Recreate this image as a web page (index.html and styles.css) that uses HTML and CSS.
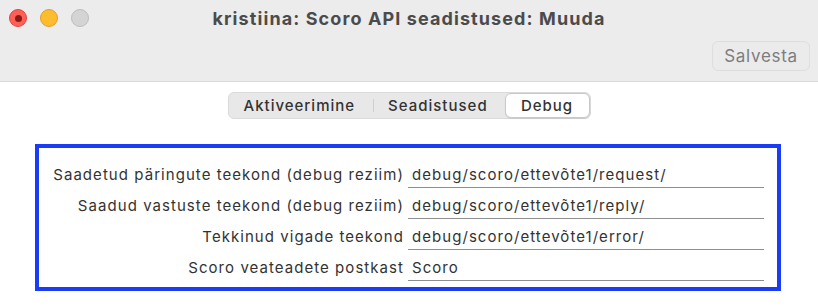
FILE: index.html
```html
<!DOCTYPE html>
<html lang="et">
<head>
  <meta charset="UTF-8">
  <meta name="viewport" content="width=device-width, initial-scale=1.0">
  <title>kristiina: Scoro API seadistused: Muuda</title>
  <link rel="stylesheet" href="styles.css">
</head>
<body>
  <div class="window">
    <div class="titlebar">
      <div class="title-row">
        <div class="lights">
          <span class="light close"><span class="dot"></span></span>
          <span class="light minimize"></span>
          <span class="light zoom"></span>
        </div>
        <div class="title">kristiina: Scoro API seadistused: Muuda</div>
      </div>
      <div class="toolbar">
        <button class="save">Salvesta</button>
      </div>
    </div>

    <div class="content">
      <div class="tabs">
        <div class="tab">Aktiveerimine</div>
        <div class="sep"></div>
        <div class="tab">Seadistused</div>
        <div class="tab active">Debug</div>
      </div>

      <div class="panel">
        <div class="form">
          <div class="label">Saadetud päringute teekond (debug reziim)</div>
          <div class="field">debug/scoro/ettevõte1/request/</div>

          <div class="label">Saadud vastuste teekond (debug reziim)</div>
          <div class="field">debug/scoro/ettevõte1/reply/</div>

          <div class="label">Tekkinud vigade teekond</div>
          <div class="field">debug/scoro/ettevõte1/error/</div>

          <div class="label">Scoro veateadete postkast</div>
          <div class="field">Scoro</div>
        </div>
      </div>
    </div>
  </div>
</body>
</html>
```

FILE: styles.css
```css
body {
  margin: 0;
  background: #ffffff;
  font-family: Inter, "Liberation Sans", Arial, sans-serif;
  color: #333333;
}

.window {
  width: 818px;
  height: 306px;
  overflow: hidden;
}

.titlebar {
  height: 82px;
  background: #ececec;
  border-bottom: 1px solid #d9d9d9;
  box-sizing: border-box;
}

.title-row {
  position: relative;
  height: 36px;
  display: flex;
  align-items: center;
  justify-content: center;
}

.lights {
  position: absolute;
  left: 9px;
  top: 9px;
  display: flex;
  gap: 13px;
}

.light {
  width: 18px;
  height: 18px;
  border-radius: 50%;
  box-sizing: border-box;
  display: flex;
  align-items: center;
  justify-content: center;
}

.close {
  background: #fe5f57;
  border: 1px solid #e2463f;
}

.close .dot {
  width: 7px;
  height: 7px;
  border-radius: 50%;
  background: #8c1a14;
}

.minimize {
  background: #febc2e;
  border: 1px solid #e1a02a;
}

.zoom {
  background: #d4d4d4;
  border: 1px solid #bdbdbd;
}

.title {
  font-size: 18px;
  font-weight: 700;
  letter-spacing: 1.1px;
  color: #4b4b4b;
  margin-top: 1px;
}

.toolbar {
  display: flex;
  justify-content: flex-end;
  padding-right: 8px;
  padding-top: 5px;
}

.save {
  height: 30px;
  width: 98px;
  font-family: Inter, "Liberation Sans", Arial, sans-serif;
  font-size: 17px;
  letter-spacing: 0.7px;
  color: #7d7d7d;
  background: #ebebeb;
  border: 1px solid #dedede;
  border-radius: 6px;
  padding: 0;
}

.content {
  padding-top: 10px;
}

.tabs {
  width: 363px;
  height: 27px;
  margin: 0 auto;
  box-sizing: border-box;
  background: #e8e8e8;
  border: 1px solid #dadada;
  border-radius: 6px;
  display: flex;
  align-items: center;
  font-size: 15px;
  font-weight: 500;
  letter-spacing: 1px;
  color: #333333;
}

.tab {
  padding: 0 14px;
  height: 25px;
  line-height: 25px;
  box-sizing: border-box;
  white-space: nowrap;
}

.tab:first-child {
  padding-left: 15px;
  padding-right: 18px;
}

.sep {
  width: 1px;
  height: 13px;
  background: #cfcfcf;
}

.tab.active {
  margin-left: auto;
  width: 85px;
  padding: 0;
  text-align: center;
  background: #ffffff;
  border: 1px solid #c9c9c9;
  border-radius: 6px;
  line-height: 23px;
  box-shadow: 0 1px 1px rgba(0, 0, 0, 0.08);
}

.panel {
  margin-top: 25px;
  margin-left: 35px;
  width: 746px;
  height: 147px;
  box-sizing: border-box;
  border: 4px solid #1a3cf5;
  padding-top: 10px;
}

.form {
  display: grid;
  grid-template-columns: 365px 356px;
  column-gap: 4px;
  row-gap: 1px;
  font-size: 15px;
  letter-spacing: 1.05px;
}

.label {
  text-align: right;
  height: 30px;
  line-height: 34px;
  color: #333333;
  white-space: nowrap;
}

.field {
  height: 29px;
  line-height: 34px;
  border-bottom: 1px solid #8e8e8e;
  padding-left: 4px;
  color: #333333;
  white-space: nowrap;
}
```
